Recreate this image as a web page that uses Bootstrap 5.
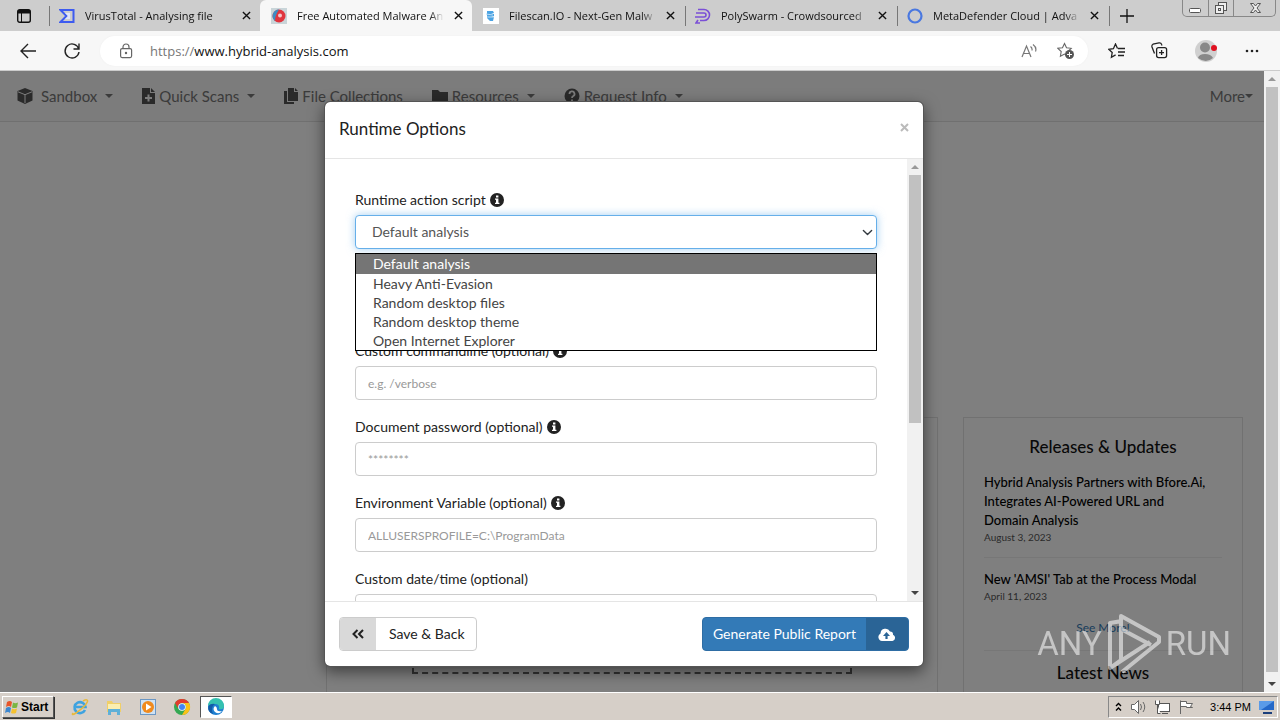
<!DOCTYPE html>
<html lang="en">
<head>
<meta charset="utf-8">
<meta name="viewport" content="width=device-width, initial-scale=1">
<title>Free Automated Malware Analysis</title>
<link href="https://cdn.jsdelivr.net/npm/bootstrap@5.3.0/dist/css/bootstrap.min.css" rel="stylesheet">
<style>
body{font-family:Lato,"Open Sans",sans-serif;font-size:14px;line-height:20px;color:#222}
svg{display:block;flex:none}
button{font:inherit}
.chrome-ui{font-family:"Open Sans","Noto Sans",sans-serif}
.plain{border:0;background:none;padding:0;color:inherit}
/* tab strip */
.tabstrip{height:31px;background:#cdcdcd;padding-left:16px;color:#111;font-size:11px}
.strip-menu{width:32px;flex:none}
.browser-tab{flex:0 1 212px;min-width:0;padding:0 9px 0 10px;gap:10px;border-left:1px solid transparent}
.browser-tab.sep{background:linear-gradient(#777,#777) left 0 top 6px/1px 20px no-repeat}
.browser-tab.current{background:#f7f7f7;border-radius:6px 6px 0 0}
.browser-tab.new-tab{flex:none}
.tab-title{flex:1;min-width:0;white-space:nowrap;overflow:hidden;-webkit-mask-image:linear-gradient(90deg,#000 90%,transparent)}
.win-buttons{height:17px;margin-right:4px;border:1px solid #888;border-top:0;border-radius:0 0 5px 5px;overflow:hidden}
.win-buttons button{width:25px}
.win-buttons button+button{border-left:1px solid #888}
.win-buttons button:last-child{width:42px}
/* toolbar */
.toolbar{height:40px;background:#f7f7f7;border-bottom:1px solid #ccc;padding:0 20px 0 20px;color:#222}
.address{height:30px;border-radius:15px;background:#fff;margin:0 20px 0 20px;padding:0 14px 0 18px;box-shadow:0 0 2px #eee}
.url-text{font-size:13px;color:#111}
.url-text span{color:#777}
.tool-icons{width:152px}
/* page */
.viewport-pane{min-height:0;background:#fff}
.site-nav{height:51px;background:#f8f8f8;border-bottom:1px solid #e0e0e0;font-size:15px;padding:0 11px 0 17px;gap:29px}
.site-nav a{color:#777;text-decoration:none;white-space:nowrap}
.caret-down{border:4px solid transparent;border-top-color:#777;border-bottom:0}
.columns{margin-top:295px;padding-right:21px;gap:25px;height:400px}
.panel{border:1px solid #e3e3e3;background:#fff}
.panel-main{width:612px;padding:0 85px}
.dropzone{height:256px;border:2px dashed #666;border-top:0}
.panel-side{width:280px;padding:19px 20px}
.panel-side h2{font-size:17px;line-height:20px;margin:0 0 16px;color:#111}
.panel-side h3{font-size:13px;line-height:19px;margin:0;color:#000;white-space:pre-line}
.panel-side time{display:block;font-size:10px;line-height:14px;color:#555}
.panel-side hr{margin:13px 0 12px;border-color:#bbb}
.more-link{font-size:12px;line-height:18px;color:#337ab7}
.dim{background:rgba(0,0,0,.5)}
.bar-v{width:16px;background:#f1f1f1}
.bar-v .thumb{background:#c1c1c1;margin:0 2px}
.bar-v .arrow{height:16px}
.tri{width:0;height:0;border:4px solid transparent}
.tri.up{border-bottom-color:#999;border-top:0}
.tri.down{border-top-color:#444;border-bottom:0}
/* dialog */
.dialog-layer{padding-right:16px}
.options-dialog{max-width:600px;margin:30px auto 0}
.options-dialog .modal-content{border:1px solid #555;border-radius:6px;box-shadow:0 5px 15px rgba(0,0,0,.5);color:#222}
.options-dialog .modal-header{height:57px;padding:14px;border-color:#e5e5e5;align-items:flex-start}
.options-dialog .modal-title{font-size:17px;line-height:25px}
.options-body{height:calc(100vh - 278px);overflow:hidden}
.options-form{padding:31px 30px 0;min-width:0}
.field{margin-bottom:17px;position:relative}
.field.scripted{margin-bottom:92px}
.field label{display:flex;align-items:center;gap:4px;height:20px;margin-bottom:5px;line-height:20px}
.field .form-control,.field .form-select{height:34px;border:1px solid #ccc;border-radius:4px;padding:6px 12px;font-size:14px;line-height:20px;color:#555}
.field .form-control{font-size:12px}
.field .form-control::placeholder{color:#999}
.field .form-select{padding-left:16px;border-color:#66afe9;box-shadow:0 0 8px rgba(102,175,233,.6);background-position:right 3px center;background-size:11px}
.choices{top:63px;z-index:2;border:1px solid #000;background:#fff;margin:0;color:#444}
.choices li{height:19px;line-height:19px;padding-left:17px}
.choices li.chosen{background:#757575;color:#fff;height:20px}
.options-dialog .modal-footer{height:65px;padding:15px 14px;border-color:#e5e5e5}
.options-dialog .modal-footer>*{margin:0}
.act{height:34px;border:1px solid #ccc;border-radius:4px;background:#fff;overflow:hidden;padding:0;color:#222}
.act i{width:36px;background:#d9d9d9;align-self:stretch}
.act.go{background:#337ab7;border-color:#2e6da4;color:#fff}
.act.go i{width:42px;background:#2a6496}
.act b{font-weight:400;padding:0 10px}
.act.back b{padding:0 11px 0 13px}
.watermark{right:49px;z-index:3;gap:3px;opacity:.55;color:#fff;font-family:"Liberation Sans Narrow","Roboto",sans-serif;font-size:33px;line-height:64px}
/* taskbar */
.taskbar{height:28px;background:#d6cfc8;border-top:1px solid #fff;box-shadow:0 -1px #aaa;padding:3px 2px 2px;color:#000}
.start{width:52px;height:22px;border:1px solid;border-color:#fff #555 #555 #fff;box-shadow:1px 1px #333;background:#d6cfc8;padding:0 2px;font-family:"Liberation Sans",sans-serif;font-size:12px;font-weight:700;gap:2px}
.task-list{margin-left:10px;gap:2px}
.task{width:32px;height:22px}
.task.on{background:#fff;border:1px solid;border-color:#555 #fff #fff #555}
.tray{border:1px solid;border-color:#888 #fff #fff #888;height:22px;padding:0 2px 0 6px;gap:8px;font-family:"Liberation Sans",sans-serif;font-size:11px}
</style>
</head>
<body class="vh-100 d-flex flex-column overflow-hidden">
<svg class="d-none" aria-hidden="true">
<symbol id="x" viewBox="0 0 10 10"><path d="M1 1l8 8M9 1L1 9" stroke="#111" stroke-width="1.5"/></symbol>
<symbol id="info" viewBox="0 0 14 14"><circle cx="7" cy="7" r="7" fill="#222"/><path d="M6 2.500h2.400v2H6zM5 5.600h3.400v4.200h1V11H5V9.800h1V6.800H5z" fill="#fff"/></symbol>
</svg>
<header class="chrome-ui">
<div class="tabstrip d-flex">
 <button class="plain strip-menu d-flex align-items-center" aria-label="Tab actions"><svg width="16" height="16" viewBox="0 0 16 16"><rect x="1.700" y="1.700" width="12.600" height="12.600" rx="2" fill="none" stroke="#111" stroke-width="1.400"/><path d="M2 2h12v3.500H2z" fill="#111"/><path d="M5.500 5v9" stroke="#111"/></svg></button>
 <div class="browser-tab sep d-flex align-items-center"><svg width="16" height="16" viewBox="0 0 16 16"><path d="M1.500 2h13v12h-13l6-6z" fill="none" stroke="#3d5bf0" stroke-width="2"/><path d="M6 5h5v6H6l3-3z" fill="#dfe4fb"/></svg><span class="tab-title">VirusTotal - Analysing file</span><button class="plain" aria-label="Close tab"><svg width="9" height="9"><use href="#x"/></svg></button></div>
 <div class="browser-tab current d-flex align-items-center"><svg width="16" height="16" viewBox="0 0 16 16"><rect width="16" height="16" fill="#c9d5d9"/><circle cx="8" cy="8" r="6.500" fill="#e0353e"/><path d="M8 1.500a6.500 6.500 0 0 0-4 11.500C4 9 5 6 8 1.500z" fill="#3c8dc4"/><circle cx="9" cy="7.500" r="2" fill="#f5c6cb"/></svg><span class="tab-title">Free Automated Malware An</span><button class="plain" aria-label="Close tab"><svg width="9" height="9"><use href="#x"/></svg></button></div>
 <div class="browser-tab d-flex align-items-center"><svg width="16" height="16" viewBox="0 0 16 16"><rect width="16" height="16" fill="#fff"/><path d="M4 3h6l1 2-3 1h3v2l-3 1h3l-1 4H7L4 10z" fill="#4ba3e3"/><path d="M3 6l7 1M4 9h7" stroke="#b9dcf5"/></svg><span class="tab-title">Filescan.IO - Next-Gen Malw</span><button class="plain" aria-label="Close tab"><svg width="9" height="9"><use href="#x"/></svg></button></div>
 <div class="browser-tab sep d-flex align-items-center"><svg width="16" height="16" viewBox="0 0 16 16" fill="none" stroke="#7b4fd6" stroke-width="1.600"><path d="M3 1.500h6a5 5 0 0 1 0 11H5M1 5h8a2 2 0 0 1 0 4H0M3 12l-2 3h4"/></svg><span class="tab-title">PolySwarm - Crowdsourced</span><button class="plain" aria-label="Close tab"><svg width="9" height="9"><use href="#x"/></svg></button></div>
 <div class="browser-tab sep d-flex align-items-center"><svg width="16" height="16" viewBox="0 0 16 16"><circle cx="8" cy="8" r="6.500" fill="none" stroke="#4a78e0" stroke-width="2.200"/></svg><span class="tab-title">MetaDefender Cloud | Adva</span><button class="plain" aria-label="Close tab"><svg width="9" height="9"><use href="#x"/></svg></button></div>
 <div class="browser-tab new-tab sep d-flex align-items-center"><button class="plain" aria-label="New tab"><svg width="16" height="16"><path d="M8 1v14M1 8h14" stroke="#111" stroke-width="1.300"/></svg></button></div>
 <div class="win-buttons d-flex ms-auto flex-shrink-0">
  <button class="plain" aria-label="Minimize"><svg width="24" height="16"><rect x="6.500" y="8.500" width="11" height="4" rx="1" fill="#fff" stroke="#555"/></svg></button><button class="plain" aria-label="Restore"><svg width="24" height="16" fill="#eee" stroke="#555"><rect x="9.500" y="2.500" width="8" height="8"/><rect x="6.500" y="5.500" width="8" height="8"/><rect x="9.500" y="8.500" width="2" height="2"/></svg></button><button class="plain" aria-label="Close"><svg width="41" height="16"><path d="M16.500 3.500h3l2 2.500 2-2.500h3l-3.500 4.500 3.500 4.500h-3l-2-2.500-2 2.500h-3L20 8z" fill="#eee" stroke="#555"/></svg></button>
 </div>
</div>
<div class="toolbar d-flex align-items-center">
 <button class="plain" aria-label="Back"><svg width="16" height="16" fill="none" stroke="#222" stroke-width="1.400"><path d="M16 8H1M8 1L1 8l7 7"/></svg></button>
 <button class="plain ms-4 ps-1" aria-label="Refresh"><svg width="16" height="18" fill="none" stroke="#222" stroke-width="1.400"><path d="M14.800 7A7 7 0 1 0 15 10M15 1.500V7H9.500"/></svg></button>
 <div class="address d-flex align-items-center flex-fill">
  <svg width="16" height="16" fill="none" stroke="#666" stroke-width="1.200"><rect x="2.600" y="5.600" width="11" height="9" rx="1.500"/><path d="M5 5.500V4a3 3 0 0 1 6 0v1.500"/><circle cx="8" cy="10" r=".6"/></svg>
  <a class="url-text text-decoration-none flex-fill ms-3" href="#"><span>https://</span>www.hybrid-analysis.com</a>
  <button class="plain me-3 pe-1" aria-label="Read aloud"><svg width="16" height="16" fill="none" stroke="#777" stroke-width="1.200"><path d="M1 14L5.500 3 10 14M2.500 10.500h6M9.500 3.500q2 1.500 1.500 4M12 1.500q4 3 2.500 7"/></svg></button>
  <button class="plain" aria-label="Add to favorites"><svg width="17" height="17" viewBox="0 0 17 17"><path d="M7.500 1.500l2 4.200 4.700.6-3.400 3.200.8 4.700-4.100-2.200-4.100 2.200.8-4.700L.8 6.300l4.700-.6z" fill="none" stroke="#666" stroke-width="1.100"/><circle cx="12.500" cy="12.500" r="4.500" fill="#555"/><path d="M12.500 10v5M10 12.500h5" stroke="#fff"/></svg></button>
 </div>
 <div class="tool-icons d-flex align-items-center justify-content-between">
  <button class="plain" aria-label="Favorites"><svg width="17" height="16" fill="none" stroke="#222" stroke-width="1.300"><path d="M9.500 5.500L7.500 1 5.400 5.700.8 6.300l3.400 3.200-.8 4.700 4.200-2.300M10 5.500h7M10 9h7M10 12.500h6"/></svg></button>
  <button class="plain" aria-label="Collections"><svg width="17" height="17" fill="none" stroke="#222" stroke-width="1.300"><rect x="5.600" y="5.600" width="10" height="10" rx="2"/><path d="M10.600 8v5M8 10.600h5M3.500 11.500L1 5q-.5-2 1-2.800L8 .9q2-.3 2.600 1.500L11 3.500"/></svg></button>
  <button class="plain" aria-label="Profile"><svg width="24" height="24"><circle cx="12" cy="12" r="11" fill="#d0d0d0"/><circle cx="11" cy="8.500" r="5" fill="#888"/><path d="M4 19q1-4 7-4t8 4q-7 6-15 0" fill="#888"/><circle cx="20" cy="9" r="3" fill="#e01020"/></svg></button>
  <button class="plain" aria-label="Settings and more"><svg width="16" height="6" fill="#222"><circle cx="3" cy="3" r="1.300"/><circle cx="8" cy="3" r="1.300"/><circle cx="13" cy="3" r="1.300"/></svg></button>
 </div>
</div>
</header>

<main class="viewport-pane flex-fill d-flex overflow-hidden position-relative">
 <div class="flex-fill position-relative overflow-hidden">
  <nav class="site-nav d-flex align-items-center">
   <a href="#" class="d-flex align-items-center"><svg width="16" height="16" fill="#555"><path d="M8 0l7.500 3v9.500L8 16 .5 12.500V3z"/><path d="M1 3.800l7 2.900 7-2.900M8 7v8" stroke="#f8f8f8" fill="none"/></svg><span class="ms-2">Sandbox</span><span class="caret-down ms-2"></span></a>
   <a href="#" class="d-flex align-items-center"><svg width="13" height="16" viewBox="0 0 13 16"><path d="M0 0h8v5h5v11H0zM9 0l4 4H9z" fill="#555"/><path d="M6.500 6.500v7M3 10h7" stroke="#f8f8f8" stroke-width="2"/></svg><span class="ms-1">Quick Scans</span><span class="caret-down ms-2"></span></a>
   <a href="#" class="d-flex align-items-center"><svg width="14" height="16" fill="#555"><path d="M4 0h6v4h4v9H4zM11 0l3 3h-3zM0 3h3v11h7v2H0z"/></svg><span class="ms-1">File Collections</span></a>
   <a href="#" class="d-flex align-items-center"><svg width="16" height="14" fill="#555"><path d="M0 1h6l2 2h8v10H0z"/></svg><span class="ms-1">Resources</span><span class="caret-down ms-2"></span></a>
   <a href="#" class="d-flex align-items-center"><svg width="16" height="16"><circle cx="8" cy="8" r="7.500" fill="#555"/><path d="M5.500 6a2.500 2.500 0 1 1 3.500 2.200q-1 .6-1 1.800M8 11.500v2" fill="none" stroke="#f8f8f8" stroke-width="1.800"/></svg><span class="ms-1">Request Info</span><span class="caret-down ms-2"></span></a>
   <a href="#" class="d-flex align-items-center ms-auto">More<span class="caret-down"></span></a>
  </nav>
  <div class="columns d-flex justify-content-end">
   <section class="panel panel-main"><div class="dropzone"></div></section>
   <aside class="panel panel-side">
    <h2 class="text-center">Releases &amp; Updates</h2>
    <h3>Hybrid Analysis Partners with Bfore.Ai,
Integrates AI-Powered URL and
Domain Analysis</h3>
    <time>August 3, 2023</time>
    <hr>
    <h3>New 'AMSI' Tab at the Process Modal</h3>
    <time>April 11, 2023</time>
    <a href="#" class="more-link d-block text-center text-decoration-none mt-3">See More!</a>
    <hr>
    <h2 class="text-center">Latest News</h2>
   </aside>
  </div>

  <div class="dim position-absolute top-0 start-0 w-100 h-100"></div>
  <div class="modal dialog-layer d-block position-absolute top-0 start-0 w-100 h-100 overflow-hidden" role="dialog" aria-labelledby="dlgTitle">
   <div class="modal-dialog options-dialog">
    <div class="modal-content">
     <div class="modal-header">
      <h1 class="modal-title fw-normal" id="dlgTitle">Runtime Options</h1>
      <button class="plain mt-1" aria-label="Close dialog"><svg width="9" height="14"><path d="M1 4l7 7M8 4l-7 7" stroke="#bbb" stroke-width="2"/></svg></button>
     </div>
     <div class="options-body d-flex">
      <form class="options-form flex-fill">
       <div class="field scripted">
        <label for="script">Runtime action script <svg width="14" height="14"><use href="#info"/></svg></label>
        <select class="form-select" id="script"><option>Default analysis</option><option>Heavy Anti-Evasion</option><option>Random desktop files</option><option>Random desktop theme</option><option>Open Internet Explorer</option></select>
        <ul class="choices list-unstyled position-absolute w-100" role="listbox">
         <li class="chosen" role="option" aria-selected="true">Default analysis</li><li role="option">Heavy Anti-Evasion</li><li role="option">Random desktop files</li><li role="option">Random desktop theme</li><li role="option">Open Internet Explorer</li>
        </ul>
       </div>
       <div class="field"><label for="cmd">Custom commandline (optional) <svg width="14" height="14"><use href="#info"/></svg></label><input class="form-control" id="cmd" placeholder="e.g. /verbose"></div>
       <div class="field"><label for="pwd">Document password (optional) <svg width="14" height="14"><use href="#info"/></svg></label><input class="form-control" id="pwd" placeholder="********"></div>
       <div class="field"><label for="env">Environment Variable (optional) <svg width="14" height="14"><use href="#info"/></svg></label><input class="form-control" id="env" placeholder="ALLUSERSPROFILE=C:\ProgramData"></div>
       <div class="field"><label for="date">Custom date/time (optional)</label><input class="form-control" id="date"></div>
      </form>
      <div class="bar-v d-flex flex-column flex-shrink-0">
       <div class="arrow d-flex align-items-center justify-content-center"><span class="tri up"></span></div>
       <div class="thumb" style="height:56%"></div>
       <div class="arrow d-flex align-items-center justify-content-center mt-auto"><span class="tri down"></span></div>
      </div>
     </div>
     <div class="modal-footer justify-content-between">
      <button class="act back d-flex align-items-center"><i class="d-flex align-items-center justify-content-center"><svg width="12" height="10" fill="none" stroke="#222" stroke-width="2"><path d="M5.500 1l-4 4 4 4M11 1L7 5l4 4"/></svg></i><b>Save &amp; Back</b></button>
      <button class="act go d-flex align-items-center"><b>Generate Public Report</b><i class="d-flex align-items-center justify-content-center"><svg width="18" height="13" viewBox="0 0 18 13"><path d="M4 13a4 4 0 0 1-1.500-7.500A5 5 0 0 1 12 3.500a3 3 0 0 1 3 3.200A3.300 3.300 0 0 1 14.500 13z" fill="#fff"/><path d="M8.500 4L12 8H9.600v3H7.400V8H5z" fill="#2a6496"/></svg></i></button>
     </div>
    </div>
   </div>
  </div>
 </div>
 <div class="bar-v d-flex flex-column flex-shrink-0">
  <div class="arrow d-flex align-items-center justify-content-center"><span class="tri up"></span></div>
  <div class="thumb flex-fill"></div>
  <div class="arrow d-flex align-items-center justify-content-center mt-1"><span class="tri down"></span></div>
 </div>
 <div class="watermark position-absolute d-flex bottom-0 mb-3"><span>ANY</span><svg width="58" height="64" viewBox="0 0 58 64" fill="none" stroke="#fff" stroke-width="4" stroke-linejoin="round"><path d="M17 9L5 11V56L45 30M16 48V4L54 25v5L17 60M16 48L5 56"/><path d="M16 17L46 33"/></svg><span>RUN</span></div>
</main>

<footer class="taskbar d-flex align-items-center">
 <button class="start d-flex align-items-center"><svg width="14" height="14" viewBox="0 0 14 14"><path d="M2 2q3-2 5 0L6 7Q4 5 1 7z" fill="#e8552a"/><path d="M8 2.500q2 1.500 5 0L12 7.500q-3 1-5 0z" fill="#7ab642"/><path d="M1 8q3-2 5 0l-1 5q-2-2-5 0z" fill="#3c87d0"/><path d="M7 8.500q2 1.500 5 0l-1 4.500q-3 1-5 0z" fill="#f5c12e"/></svg>Start</button>
 <div class="task-list d-flex">
  <button class="plain task d-flex align-items-center justify-content-center" aria-label="Internet Explorer"><svg width="18" height="18" fill="none"><path d="M14 12a5.500 5.500 0 1 1 .5-3H5" stroke="#3ea3e0" stroke-width="2.600"/><path d="M2 15Q0 18 5 15 15 8 16.500 3.500 17 .5 12 3" stroke="#e8b93a" stroke-width="1.500"/></svg></button>
  <button class="plain task d-flex align-items-center justify-content-center" aria-label="File Explorer"><svg width="18" height="18"><path d="M2 3h5l1 2h8v9H2z" fill="#f0cf68"/><path d="M3 6h12v6H3z" fill="#fbeeb0"/><path d="M3 17v-6h12v6h-3v-3H6v3z" fill="#5fb0d8"/></svg></button>
  <button class="plain task d-flex align-items-center justify-content-center" aria-label="Media Player"><svg width="18" height="18"><rect x="1.500" y="1.500" width="15" height="15" fill="#cfe2f3" stroke="#6b97c4"/><circle cx="9" cy="9" r="6" fill="#f08a1d"/><path d="M7 5.500l5.500 3.500L7 12.500z" fill="#fff"/></svg></button>
  <button class="plain task d-flex align-items-center justify-content-center" aria-label="Chrome"><svg width="18" height="18" viewBox="0 0 18 18"><circle cx="9" cy="9" r="8" fill="#34a853"/><path d="M9 1a8 8 0 0 1 7 4H9a4 4 0 0 0-3.500 6L2 5a8 8 0 0 1 7-4z" fill="#e33b2e"/><path d="M16 5a8 8 0 0 1-7 12l3.500-6A4 4 0 0 0 9 5z" fill="#fbc116"/><circle cx="9" cy="9" r="3.800" fill="#fff"/><circle cx="9" cy="9" r="3" fill="#4285f4"/></svg></button>
  <button class="plain task on d-flex align-items-center justify-content-center" aria-label="Edge"><svg width="18" height="18"><circle cx="9" cy="9" r="8" fill="#1f7fd0"/><path d="M1 8a8 8 0 0 1 16 0q0 4-5 3 1-5-4-5-5 0-7 2z" fill="#35c1b0"/><path d="M8 8q-3 3 0 6 4 3 7-1-5 1-5-2 0-2-2-3z" fill="#fff"/><path d="M1.500 8Q4 5 8 6q-5 3-2 10Q0 14 1.500 8z" fill="#125ba8"/></svg></button>
 </div>
 <div class="tray d-flex align-items-center ms-auto">
  <svg width="7" height="10" fill="none" stroke="#000" stroke-width="1.400"><path d="M1 4l2.500-2.500L6 4M1 8.500L3.500 6 6 8.500"/></svg>
  <svg width="16" height="16" fill="#fff" stroke="#666"><path d="M1.500 5.500h3l4-4v13l-4-4h-3z"/><path d="M10.500 5q2 3 0 6M13 3q3.500 5 0 10" fill="none"/></svg>
  <svg width="16" height="16" fill="#fff" stroke="#555"><rect x="4.500" y="4.500" width="11" height="8"/><path d="M8 14.500h6M1.500 1.500v4h4v-4M3.500 6v8.500h3"/></svg>
  <svg width="16" height="16" fill="#fff" stroke="#666"><path d="M2.500 15V1.500M2.500 2.500h6v2h6l-2 3 2 1h-6v-1h-6z"/></svg>
  <span class="ms-2 text-nowrap">3:44 PM</span>
  <svg width="16" height="14"><path d="M0 1h15v9H0z" fill="#2468c8"/><path d="M0 1h15L2 10H0z" fill="#5a9be8"/><path d="M4 12h9v2H4z" fill="#1b3f7c"/></svg>
 </div>
</footer>
<script src="https://cdn.jsdelivr.net/npm/bootstrap@5.3.0/dist/js/bootstrap.bundle.min.js"></script>
</body>
</html>
